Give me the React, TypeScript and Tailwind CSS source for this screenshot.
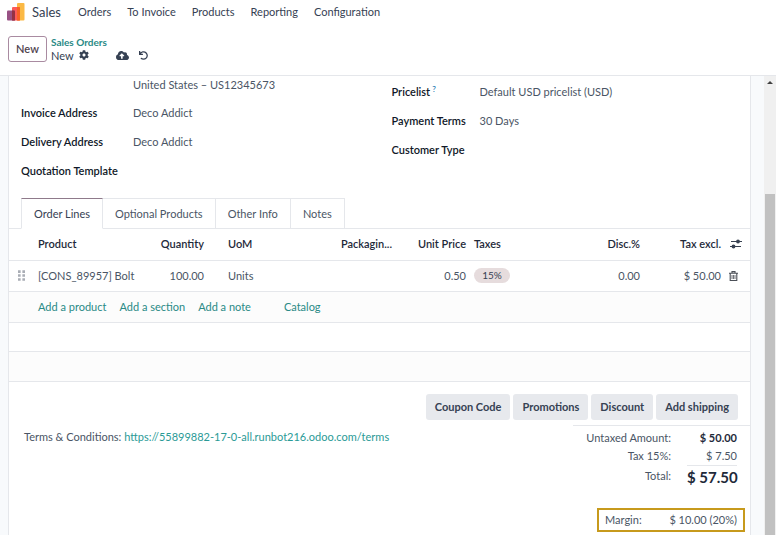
import { FaCloudUploadAlt, FaCog, FaUndo } from "react-icons/fa";

const menus = ["Orders", "To Invoice", "Products", "Reporting", "Configuration"];
const tabs = ["Order Lines", "Optional Products", "Other Info", "Notes"];
const actions = ["Coupon Code", "Promotions", "Discount", "Add shipping"];

function SalesLogo() {
  return (
    <svg width="18" height="18" viewBox="0 0 18 18" aria-hidden="true">
      <rect x="10" y="0" width="7.5" height="17.5" rx="1" fill="#fbb945" />
      <rect x="5" y="4" width="8" height="13.5" rx="1" fill="#fc5b5b" />
      <path d="M10 4h2a1 1 0 0 1 1 1v12.5h-3z" fill="#f86126" />
      <rect x="0" y="7.5" width="8" height="10" rx="1" fill="#985184" />
      <path d="M5 7.5h2a1 1 0 0 1 1 1v9H5z" fill="#953144" />
    </svg>
  );
}

function AdjustIcon() {
  return (
    <svg width="12" height="10" viewBox="0 0 12 10" aria-hidden="true">
      <path d="M1 2.5h11M0 7.5h11" stroke="#374151" strokeWidth="1.1" />
      <circle cx="8" cy="2.5" r="1.9" fill="#374151" />
      <circle cx="3.5" cy="7.5" r="1.9" fill="#374151" />
    </svg>
  );
}

function TrashIcon() {
  return (
    <svg width="9" height="10" viewBox="0 0 9 10" fill="none" stroke="#4b4f57" aria-hidden="true">
      <path d="M0 2.2h9M3 2V.6h3V2M1.2 2.5v7h6.6v-7" strokeWidth="1.1" />
      <path d="M3 4v4M4.5 4v4M6 4v4" strokeWidth="0.8" />
    </svg>
  );
}

function DragHandle() {
  return (
    <svg width="7" height="11" viewBox="0 0 8 12" fill="#a9adb5" aria-hidden="true">
      <path d="M0 0h3v3H0zM5 0h3v3H5zM0 4.5h3v3H0zM5 4.5h3v3H5zM0 9h3v3H0zM5 9h3v3H5z" />
    </svg>
  );
}

function Field({ label, value, help, wide }: { label: string; value?: string; help?: boolean; wide?: boolean }) {
  return (
    <div className="flex h-[29px] items-center">
      <dt className={(wide ? "w-[112px]" : "w-[88px]") + " shrink-0 whitespace-nowrap font-semibold text-gray-900"}>
        {label}
        {help && <sup className="ml-0.5 text-[8px] font-normal text-sky-700">?</sup>}
      </dt>
      <dd className="whitespace-nowrap">{value}</dd>
    </div>
  );
}

export default function App() {
  return (
    <div className="flex h-screen flex-col overflow-hidden bg-white pr-[3px] pb-[6px] font-['Lato','Open_Sans',sans-serif] text-[11px] leading-4 text-gray-600">
      <nav className="flex h-6 shrink-0 items-center pl-[7px]">
        <SalesLogo />
        <a href="#sales" className="ml-[7px] mr-[17px] text-[13px] text-gray-700">Sales</a>
        <div className="flex gap-4 text-gray-700">
          {menus.map((m) => (
            <button key={m} type="button">{m}</button>
          ))}
        </div>
      </nav>
      <header className="flex h-[52px] shrink-0 items-center gap-1 border-b border-gray-200 pl-2 pb-[2px]">
        <button type="button" className="h-[26px] w-[39px] rounded-[3px] border border-[#a98ba1] font-semibold text-[#50434e]">
          New
        </button>
        <div className="flex flex-col leading-[13px]">
          <a href="#orders" className="text-[10px] font-bold text-[#2a8a86]">Sales Orders</a>
          <div className="flex items-center text-gray-700">
            <span>New</span>
            <button type="button" aria-label="Actions" className="ml-[5px]"><FaCog size={10} /></button>
            <button type="button" aria-label="Save" className="ml-[27px]"><FaCloudUploadAlt size={13} /></button>
            <button type="button" aria-label="Discard" className="ml-[10px]"><FaUndo size={9} /></button>
          </div>
        </div>
      </header>

      <div className="flex min-h-0 flex-1 bg-[#f8fafc]">
        <main className="ml-2 mr-[13px] min-w-0 flex-1 overflow-hidden border-x border-gray-200 bg-white">
          <div className="flex h-[122px] px-3">
            <dl className="-mt-[5px] w-1/2 grow">
              <div className="flex h-[27px] items-center">
                <dt className="w-[112px]" />
                <dd>United States – US12345673</dd>
              </div>
              <Field label="Invoice Address" value="Deco Addict" wide />
              <Field label="Delivery Address" value="Deco Addict" wide />
              <Field label="Quotation Template" wide />
            </dl>
            <dl className="w-1/2 pl-3 pt-px">
              <Field label="Pricelist" value="Default USD pricelist (USD)" help />
              <Field label="Payment Terms" value="30 Days" />
              <Field label="Customer Type" />
            </dl>
          </div>

          <div role="tablist" className="flex h-[31px] border-b border-gray-200 pl-3">
            {tabs.map((t, i) => (
              <button
                key={t}
                type="button"
                role="tab"
                aria-selected={i === 0}
                className={
                  i === 0
                    ? "-mb-px border border-gray-200 border-t-[#8f7a8b] border-b-white bg-white px-3 text-gray-700"
                    : "border-t border-r border-gray-200 px-3"
                }
              >
                {t}
              </button>
            ))}
          </div>

          <table className="w-full table-fixed border-collapse whitespace-nowrap">
            <colgroup>
              <col className="w-[25px]" />
              <col />
              <col className="w-[71px]" />
              <col className="w-[101px]" />
              <col className="w-[71px]" />
              <col className="w-[74px]" />
              <col className="w-[100px]" />
              <col className="w-[74px]" />
              <col className="w-[81px]" />
              <col className="w-[25px]" />
            </colgroup>
            <thead>
              <tr className="h-[31px] border-b border-gray-200 text-left text-gray-800 [&>th]:p-1 [&>th]:font-semibold">
                <th aria-label="Reorder" />
                <th>Product</th>
                <th><div className="pr-4 text-right">Quantity</div></th>
                <th>UoM</th>
                <th><div className="text-right">Packagin...</div></th>
                <th><div className="text-right">Unit Price</div></th>
                <th>Taxes</th>
                <th><div className="text-right">Disc.%</div></th>
                <th><div className="text-right">Tax excl.</div></th>
                <th><button type="button" aria-label="Optional columns" className="ml-px block"><AdjustIcon /></button></th>
              </tr>
            </thead>
            <tbody>
              <tr className="h-[31px] border-b border-gray-200 [&>td]:px-1 [&>td]:py-0">
                <td><div className="pl-[5px]"><DragHandle /></div></td>
                <td>[CONS_89957] Bolt</td>
                <td><div className="pr-4 text-right">100.00</div></td>
                <td>Units</td>
                <td />
                <td className="text-right">0.50</td>
                <td>
                  <span className="block w-9 rounded-full bg-[#e6dcdd] text-center text-[10px] leading-[15px] text-gray-700">15%</span>
                </td>
                <td className="text-right">0.00</td>
                <td className="text-right">$ 50.00</td>
                <td><button type="button" aria-label="Delete line" className="block"><TrashIcon /></button></td>
              </tr>
              <tr className="h-[31px] border-b border-gray-200 bg-[#fcfcfc] text-[#2a8a86]">
                <td />
                <td colSpan={9} className="px-1">
                  <div className="flex gap-[13px]">
                    <a href="#product">Add a product</a>
                    <a href="#section">Add a section</a>
                    <a href="#note">Add a note</a>
                    <a href="#catalog" className="ml-5">Catalog</a>
                  </div>
                </td>
              </tr>
              <tr className="h-[29px] border-b border-gray-200"><td colSpan={10} /></tr>
              <tr className="h-[30px] border-b border-gray-200 bg-[#fcfcfc]"><td colSpan={10} /></tr>
            </tbody>
          </table>

          <div className="mt-3 flex justify-end gap-[3px] pr-3">
            {actions.map((a) => (
              <button key={a} type="button" className="h-[26px] rounded-[3px] bg-[#e7e9ed] px-[9px] font-bold text-gray-700">
                {a}
              </button>
            ))}
          </div>

          <div className="mt-[5px] flex justify-between">
            <p className="pl-[15px] pt-1">
              Terms &amp; Conditions:{" "}
              <a href="https://55899882-17-0-all.runbot216.odoo.com/terms" className="text-[#2a9a96]">
                https://55899882-17-0-all.runbot216.odoo.com/terms
              </a>
            </p>
            <div className="w-[177px]">
              <dl className="grid grid-cols-[1fr_50px] gap-x-4 border-t border-gray-200 pt-[3px] pr-[13px] text-right">
                <dt className="leading-[18px]">Untaxed Amount:</dt>
                <dd className="font-bold leading-[18px] text-gray-800">$ 50.00</dd>
                <dt className="leading-[18px]">Tax 15%:</dt>
                <dd className="leading-[18px]">$ 7.50</dd>
                <dt className="leading-[22px]">Total:</dt>
                <dd className="whitespace-nowrap border-t border-gray-200 text-[15px] font-bold leading-[22px] text-gray-800">$ 57.50</dd>
              </dl>
              <dl className="ml-6 mr-[5px] mt-5 flex h-6 items-center justify-between border-2 border-[#c79a1c] px-1.5">
                <dt>Margin:</dt>
                <dd>$ 10.00 (20%)</dd>
              </dl>
            </div>
          </div>
        </main>

        <div className="flex w-3 shrink-0 flex-col items-center bg-[#f0f0f0]" aria-hidden="true">
          <svg className="mt-1 shrink-0" width="6" height="5" viewBox="0 0 6 5">
            <path d="M3 1 6 4H0z" fill="#404040" />
          </svg>
          <div className="mt-[109px] w-2.5 flex-1 bg-[#c1c1c1]" />
        </div>
      </div>
    </div>
  );
}
